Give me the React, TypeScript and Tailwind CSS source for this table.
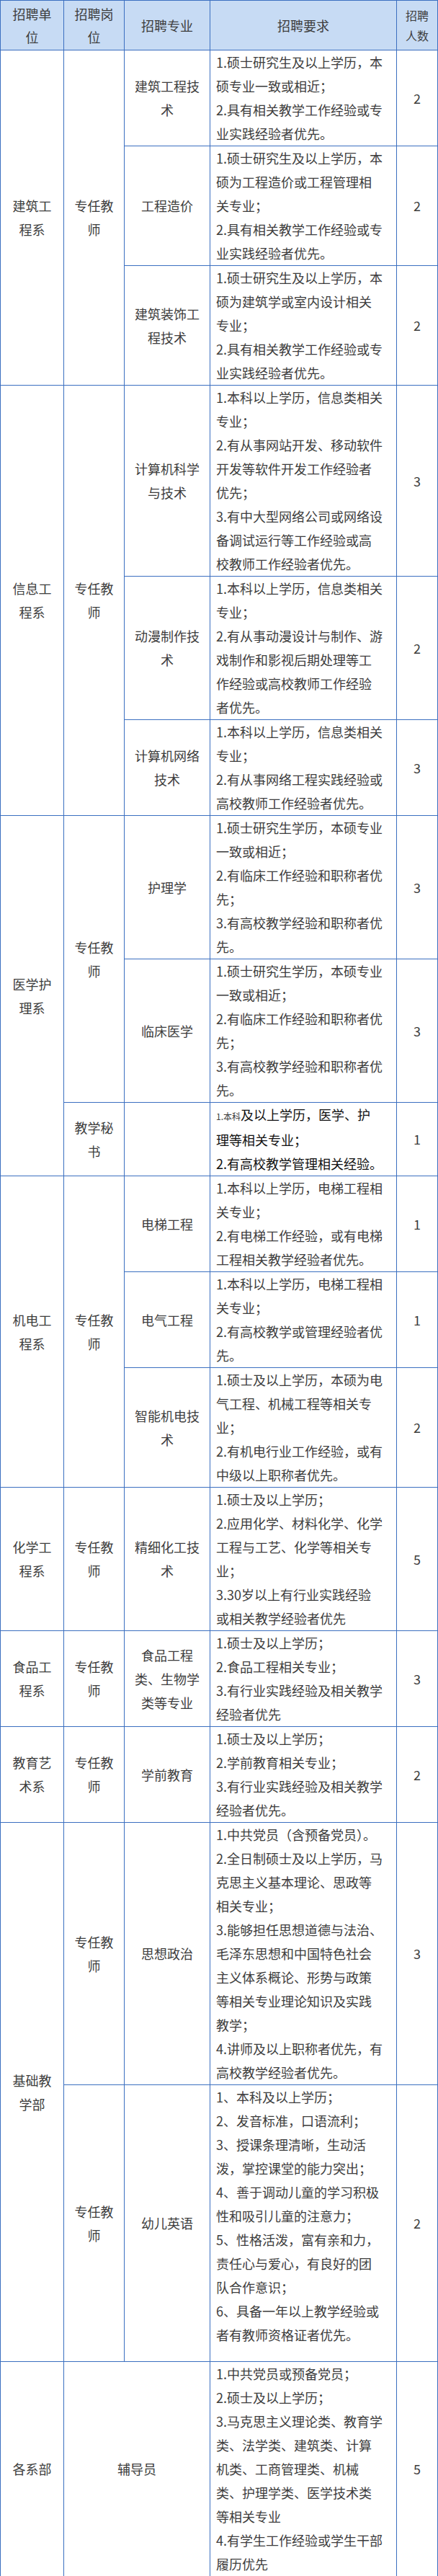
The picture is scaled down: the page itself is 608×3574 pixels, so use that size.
import React from "react";

type Lines = string[];

const td = "border border-[#3b6fc0] align-middle px-2 leading-[33px] text-[18px]";

function L({ lines }: { lines: Lines }) {
  return (
    <>
      {lines.map((l, i) => (
        <div key={i} className="whitespace-nowrap">
          {l}
        </div>
      ))}
    </>
  );
}

function Req({ lines, className = "" }: { lines: Lines; className?: string }) {
  return (
    <td className={`${td} text-left ${className}`}>
      <L lines={lines} />
    </td>
  );
}

function C({ lines, rowSpan, colSpan }: { lines: Lines; rowSpan?: number; colSpan?: number }) {
  return (
    <td rowSpan={rowSpan} colSpan={colSpan} className={`${td} text-center`}>
      <L lines={lines} />
    </td>
  );
}

function N({ n }: { n: string }) {
  return <td className={`${td} text-center`}>{n}</td>;
}

export default function App() {
  return (
    <div
      className="w-[608px] bg-white text-[#3d3d3d]"
      style={{ fontFamily: '"Noto Sans CJK SC", "Noto Sans", sans-serif' }}
    >
      <table className="w-[607px] table-fixed border-collapse">
        <colgroup>
          <col className="w-[88px]" />
          <col className="w-[84px]" />
          <col className="w-[119px]" />
          <col className="w-[259px]" />
          <col className="w-[57px]" />
        </colgroup>
        <thead>
          <tr className="h-[69px] bg-[#c7dbf4]">
            <th className="border border-[#3b6fc0] align-middle px-1 font-normal text-[18px] leading-[32px]">
              <L lines={["招聘单", "位"]} />
            </th>
            <th className="border border-[#3b6fc0] align-middle px-1 font-normal text-[18px] leading-[32px]">
              <L lines={["招聘岗", "位"]} />
            </th>
            <th className="border border-[#3b6fc0] align-middle px-1 font-normal text-[18px] leading-[32px]">
              招聘专业
            </th>
            <th className="border border-[#3b6fc0] align-middle px-1 font-normal text-[18px] leading-[32px]">
              招聘要求
            </th>
            <th className="border border-[#3b6fc0] align-middle px-1 font-normal text-[16px] leading-[28px]">
              <L lines={["招聘", "人数"]} />
            </th>
          </tr>
        </thead>
        <tbody>
          {/* 建筑工程系 */}
          <tr>
            <C rowSpan={3} lines={["建筑工", "程系"]} />
            <C rowSpan={3} lines={["专任教", "师"]} />
            <C lines={["建筑工程技", "术"]} />
            <Req
              lines={[
                "1.硕士研究生及以上学历，本",
                "硕专业一致或相近；",
                "2.具有相关教学工作经验或专",
                "业实践经验者优先。",
              ]}
            />
            <N n="2" />
          </tr>
          <tr>
            <C lines={["工程造价"]} />
            <Req
              lines={[
                "1.硕士研究生及以上学历，本",
                "硕为工程造价或工程管理相",
                "关专业；",
                "2.具有相关教学工作经验或专",
                "业实践经验者优先。",
              ]}
            />
            <N n="2" />
          </tr>
          <tr>
            <C lines={["建筑装饰工", "程技术"]} />
            <Req
              lines={[
                "1.硕士研究生及以上学历，本",
                "硕为建筑学或室内设计相关",
                "专业；",
                "2.具有相关教学工作经验或专",
                "业实践经验者优先。",
              ]}
            />
            <N n="2" />
          </tr>

          {/* 信息工程系 */}
          <tr>
            <C rowSpan={3} lines={["信息工", "程系"]} />
            <C rowSpan={3} lines={["专任教", "师"]} />
            <C lines={["计算机科学", "与技术"]} />
            <Req
              lines={[
                "1.本科以上学历，信息类相关",
                "专业；",
                "2.有从事网站开发、移动软件",
                "开发等软件开发工作经验者",
                "优先；",
                "3.有中大型网络公司或网络设",
                "备调试运行等工作经验或高",
                "校教师工作经验者优先。",
              ]}
            />
            <N n="3" />
          </tr>
          <tr>
            <C lines={["动漫制作技", "术"]} />
            <Req
              lines={[
                "1.本科以上学历，信息类相关",
                "专业；",
                "2.有从事动漫设计与制作、游",
                "戏制作和影视后期处理等工",
                "作经验或高校教师工作经验",
                "者优先。",
              ]}
            />
            <N n="2" />
          </tr>
          <tr>
            <C lines={["计算机网络", "技术"]} />
            <Req
              lines={[
                "1.本科以上学历，信息类相关",
                "专业；",
                "2.有从事网络工程实践经验或",
                "高校教师工作经验者优先。",
              ]}
            />
            <N n="3" />
          </tr>

          {/* 医学护理系 */}
          <tr>
            <C rowSpan={3} lines={["医学护", "理系"]} />
            <C rowSpan={2} lines={["专任教", "师"]} />
            <C lines={["护理学"]} />
            <Req
              lines={[
                "1.硕士研究生学历，本硕专业",
                "一致或相近；",
                "2.有临床工作经验和职称者优",
                "先；",
                "3.有高校教学经验和职称者优",
                "先。",
              ]}
            />
            <N n="3" />
          </tr>
          <tr>
            <C lines={["临床医学"]} />
            <Req
              lines={[
                "1.硕士研究生学历，本硕专业",
                "一致或相近；",
                "2.有临床工作经验和职称者优",
                "先；",
                "3.有高校教学经验和职称者优",
                "先。",
              ]}
            />
            <N n="3" />
          </tr>
          <tr>
            <C lines={["教学秘", "书"]} />
            <td className={td}></td>
            <td className={`${td} text-left text-[#111]`}>
              <div className="whitespace-nowrap">
                <span className="text-[12px] text-[#3d3d3d]">1.本科</span>及以上学历，医学、护
              </div>
              <div className="whitespace-nowrap">理等相关专业；</div>
              <div className="whitespace-nowrap">2.有高校教学管理相关经验。</div>
            </td>
            <N n="1" />
          </tr>

          {/* 机电工程系 */}
          <tr>
            <C rowSpan={3} lines={["机电工", "程系"]} />
            <C rowSpan={3} lines={["专任教", "师"]} />
            <C lines={["电梯工程"]} />
            <Req
              lines={[
                "1.本科以上学历，电梯工程相",
                "关专业；",
                "2.有电梯工作经验，或有电梯",
                "工程相关教学经验者优先。",
              ]}
            />
            <N n="1" />
          </tr>
          <tr>
            <C lines={["电气工程"]} />
            <Req
              lines={[
                "1.本科以上学历，电梯工程相",
                "关专业；",
                "2.有高校教学或管理经验者优",
                "先。",
              ]}
            />
            <N n="1" />
          </tr>
          <tr>
            <C lines={["智能机电技", "术"]} />
            <Req
              lines={[
                "1.硕士及以上学历，本硕为电",
                "气工程、机械工程等相关专",
                "业；",
                "2.有机电行业工作经验，或有",
                "中级以上职称者优先。",
              ]}
            />
            <N n="2" />
          </tr>

          {/* 化学工程系 */}
          <tr>
            <C lines={["化学工", "程系"]} />
            <C lines={["专任教", "师"]} />
            <C lines={["精细化工技", "术"]} />
            <Req
              lines={[
                "1.硕士及以上学历；",
                "2.应用化学、材料化学、化学",
                "工程与工艺、化学等相关专",
                "业；",
                "3.30岁以上有行业实践经验",
                "或相关教学经验者优先",
              ]}
            />
            <N n="5" />
          </tr>

          {/* 食品工程系 */}
          <tr>
            <C lines={["食品工", "程系"]} />
            <C lines={["专任教", "师"]} />
            <C lines={["食品工程", "类、生物学", "类等专业"]} />
            <Req
              lines={[
                "1.硕士及以上学历；",
                "2.食品工程相关专业；",
                "3.有行业实践经验及相关教学",
                "经验者优先",
              ]}
            />
            <N n="3" />
          </tr>

          {/* 教育艺术系 */}
          <tr>
            <C lines={["教育艺", "术系"]} />
            <C lines={["专任教", "师"]} />
            <C lines={["学前教育"]} />
            <Req
              lines={[
                "1.硕士及以上学历；",
                "2.学前教育相关专业；",
                "3.有行业实践经验及相关教学",
                "经验者优先。",
              ]}
            />
            <N n="2" />
          </tr>

          {/* 基础教学部 */}
          <tr>
            <C rowSpan={2} lines={["基础教", "学部"]} />
            <C lines={["专任教", "师"]} />
            <C lines={["思想政治"]} />
            <Req
              lines={[
                "1.中共党员（含预备党员）。",
                "2.全日制硕士及以上学历，马",
                "克思主义基本理论、思政等",
                "相关专业；",
                "3.能够担任思想道德与法治、",
                "毛泽东思想和中国特色社会",
                "主义体系概论、形势与政策",
                "等相关专业理论知识及实践",
                "教学；",
                "4.讲师及以上职称者优先，有",
                "高校教学经验者优先。",
              ]}
            />
            <N n="3" />
          </tr>
          <tr>
            <C lines={["专任教", "师"]} />
            <C lines={["幼儿英语"]} />
            <Req
              className="pb-[20px]"
              lines={[
                "1、本科及以上学历；",
                "2、发音标准，口语流利；",
                "3、授课条理清晰，生动活",
                "泼，掌控课堂的能力突出；",
                "4、善于调动儿童的学习积极",
                "性和吸引儿童的注意力；",
                "5、性格活泼，富有亲和力，",
                "责任心与爱心，有良好的团",
                "队合作意识；",
                "6、具备一年以上教学经验或",
                "者有教师资格证者优先。",
              ]}
            />
            <N n="2" />
          </tr>

          {/* 各系部 */}
          <tr>
            <C lines={["各系部"]} />
            <C colSpan={2} lines={["辅导员"]} />
            <Req
              lines={[
                "1.中共党员或预备党员；",
                "2.硕士及以上学历；",
                "3.马克思主义理论类、教育学",
                "类、法学类、建筑类、计算",
                "机类、工商管理类、机械",
                "类、护理学类、医学技术类",
                "等相关专业",
                "4.有学生工作经验或学生干部",
                "履历优先",
              ]}
            />
            <N n="5" />
          </tr>
        </tbody>
      </table>
    </div>
  );
}
